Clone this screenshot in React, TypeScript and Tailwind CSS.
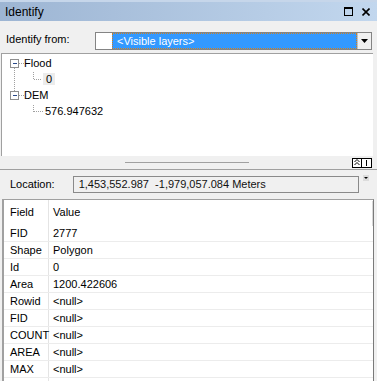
const rows: [string, string][] = [
  ["FID", "2777"],
  ["Shape", "Polygon"],
  ["Id", "0"],
  ["Area", "1200.422606"],
  ["Rowid", "<null>"],
  ["FID", "<null>"],
  ["COUNT", "<null>"],
  ["AREA", "<null>"],
  ["MAX", "<null>"],
  ["", ""],
];

function TreeLines() {
  // connectors + expand boxes of the layer tree
  return (
    <svg className="absolute left-0 top-0" width="60" height="70" shapeRendering="crispEdges">
      <g stroke="#a0a0a0" strokeDasharray="1 1">
        <line x1="17" y1="9.5" x2="22" y2="9.5" />
        <line x1="12.5" y1="14" x2="12.5" y2="37" />
        <line x1="17" y1="41.5" x2="22" y2="41.5" />
        <line x1="31.5" y1="18" x2="31.5" y2="25.5" />
        <line x1="31.5" y1="25.5" x2="40" y2="25.5" />
        <line x1="31.5" y1="51" x2="31.5" y2="57.5" />
        <line x1="31.5" y1="57.5" x2="41" y2="57.5" />
      </g>
      <g fill="#fff" stroke="#8f8f8f">
        <rect x="8.5" y="5.5" width="8" height="8" />
        <rect x="8.5" y="37.5" width="8" height="8" />
      </g>
      <g stroke="#2a4a8a">
        <line x1="10.5" y1="9.5" x2="15" y2="9.5" />
        <line x1="10.5" y1="41.5" x2="15" y2="41.5" />
      </g>
    </svg>
  );
}

export default function App() {
  return (
    <div className="w-[377px] h-[381px] overflow-hidden bg-[#f0f0f0] text-[11px] text-black font-['Liberation_Sans',Arial,sans-serif] flex flex-col">
      {/* Title bar */}
      <div className="h-[21px] shrink-0 flex items-center justify-between pl-[5px] pr-[7px] bg-gradient-to-r from-[#9db5d3] to-[#c2d7ee] border-t-2 border-[#c6d6ea]">
        <span className="text-[12px] leading-none">Identify</span>
        <div className="flex items-center gap-[9px]">
          <svg width="9" height="9" shapeRendering="crispEdges">
            <rect x="0.5" y="0.5" width="8" height="8" fill="none" stroke="#000" />
            <line x1="0" y1="1.5" x2="9" y2="1.5" stroke="#000" />
          </svg>
          <svg width="8" height="8">
            <path d="M0.5 0.5 L7.5 7.5 M7.5 0.5 L0.5 7.5" stroke="#000" strokeWidth="1.6" />
          </svg>
        </div>
      </div>

      {/* Identify from */}
      <div className="h-[32px] shrink-0 flex items-end pb-[3px] pl-[6px] pr-[5px]">
        <span className="w-[89px] pb-[3px]">Identify from:</span>
        <div className="flex-1 h-[18px] flex border border-[#848484] bg-white">
          <div className="w-[16px]" />
          <div className="flex-1 flex items-center bg-[#3399ff] outline-1 outline-dotted outline-[#d08020] -outline-offset-1 pl-[5px] text-white">
            &lt;Visible layers&gt;
          </div>
          <div className="w-[14px] flex items-center justify-center bg-[#f0f0f0] border-l border-[#c0c0c0]">
            <svg width="7" height="4">
              <path d="M0 0 H7 L3.5 4 Z" fill="#000" />
            </svg>
          </div>
        </div>
      </div>

      {/* Tree */}
      <div className="h-[103px] shrink-0 ml-[1px] mr-[4px] bg-white border-l border-t border-[#a0a0a0] relative pt-[1px]">
        <TreeLines />
        <div className="h-[16px] flex items-center pl-[22px]">Flood</div>
        <div className="h-[16px] flex items-center pl-[41px]">
          <span className="bg-[#ececec] px-[3px] leading-[12px]">0</span>
        </div>
        <div className="h-[16px] flex items-center pl-[22px]">DEM</div>
        <div className="h-[16px] flex items-center pl-[43px]">576.947632</div>
      </div>

      {/* Splitter */}
      <div className="h-[13px] shrink-0 flex items-center relative">
        <div className="ml-[125px] w-[124px] h-px bg-[#a0a0a0]" />
        <div className="ml-auto mr-[5px] flex">
          <div className="w-[10px] h-[10px] border border-black bg-white flex items-center justify-center">
            <svg width="6" height="7">
              <path d="M0.5 3 L3 0.5 L5.5 3 M0.5 6 L3 3.5 L5.5 6" stroke="#000" fill="none" />
            </svg>
          </div>
          <div className="w-[10px] h-[10px] border border-l-0 border-black bg-white flex items-center justify-center">
            <div className="w-px h-[6px] bg-black" />
          </div>
        </div>
      </div>

      {/* Location */}
      <div className="h-[30px] shrink-0 border-t border-[#a0a0a0] flex items-center pl-[10px] pr-[8px]">
        <span className="w-[63px]">Location:</span>
        <div className="w-[288px] h-[17px] border border-[#8a8a8a] flex items-center pl-[5px] whitespace-pre text-[#111]">
          1,453,552.987  -1,979,057.084 Meters
        </div>
        <div className="ml-[4px] self-start mt-[5px] w-[6px] h-[6px] bg-[#dcdcdc] flex items-center justify-center">
          <svg width="4" height="2">
            <path d="M0 0 H4 L2 2 Z" fill="#000" />
          </svg>
        </div>
      </div>

      {/* Attribute table */}
      <div className="flex-1 ml-[2px] mr-[3px] bg-white border-l-2 border-t border-r border-l-[#a0a0a0] border-t-[#a0a0a0] border-r-[#7a7a7a] relative">
        <div className="absolute right-0 top-[1px] w-px h-[25px] bg-[#d8d8d8]" />
        <div className="h-[25px] flex items-center">
          <div className="w-[45px] h-full flex items-center pl-[6px] border-r border-[#e4e4e4]">Field</div>
          <div className="pl-[4px]">Value</div>
        </div>
        {rows.map(([f, v], i) => (
          <div key={i} className="h-[17px] flex items-center border-b border-[#ececec]">
            <div className="w-[45px] h-full flex items-center pl-[6px] border-r border-[#e4e4e4]">{f}</div>
            <div className="pl-[4px]">{v}</div>
          </div>
        ))}
      </div>
    </div>
  );
}
